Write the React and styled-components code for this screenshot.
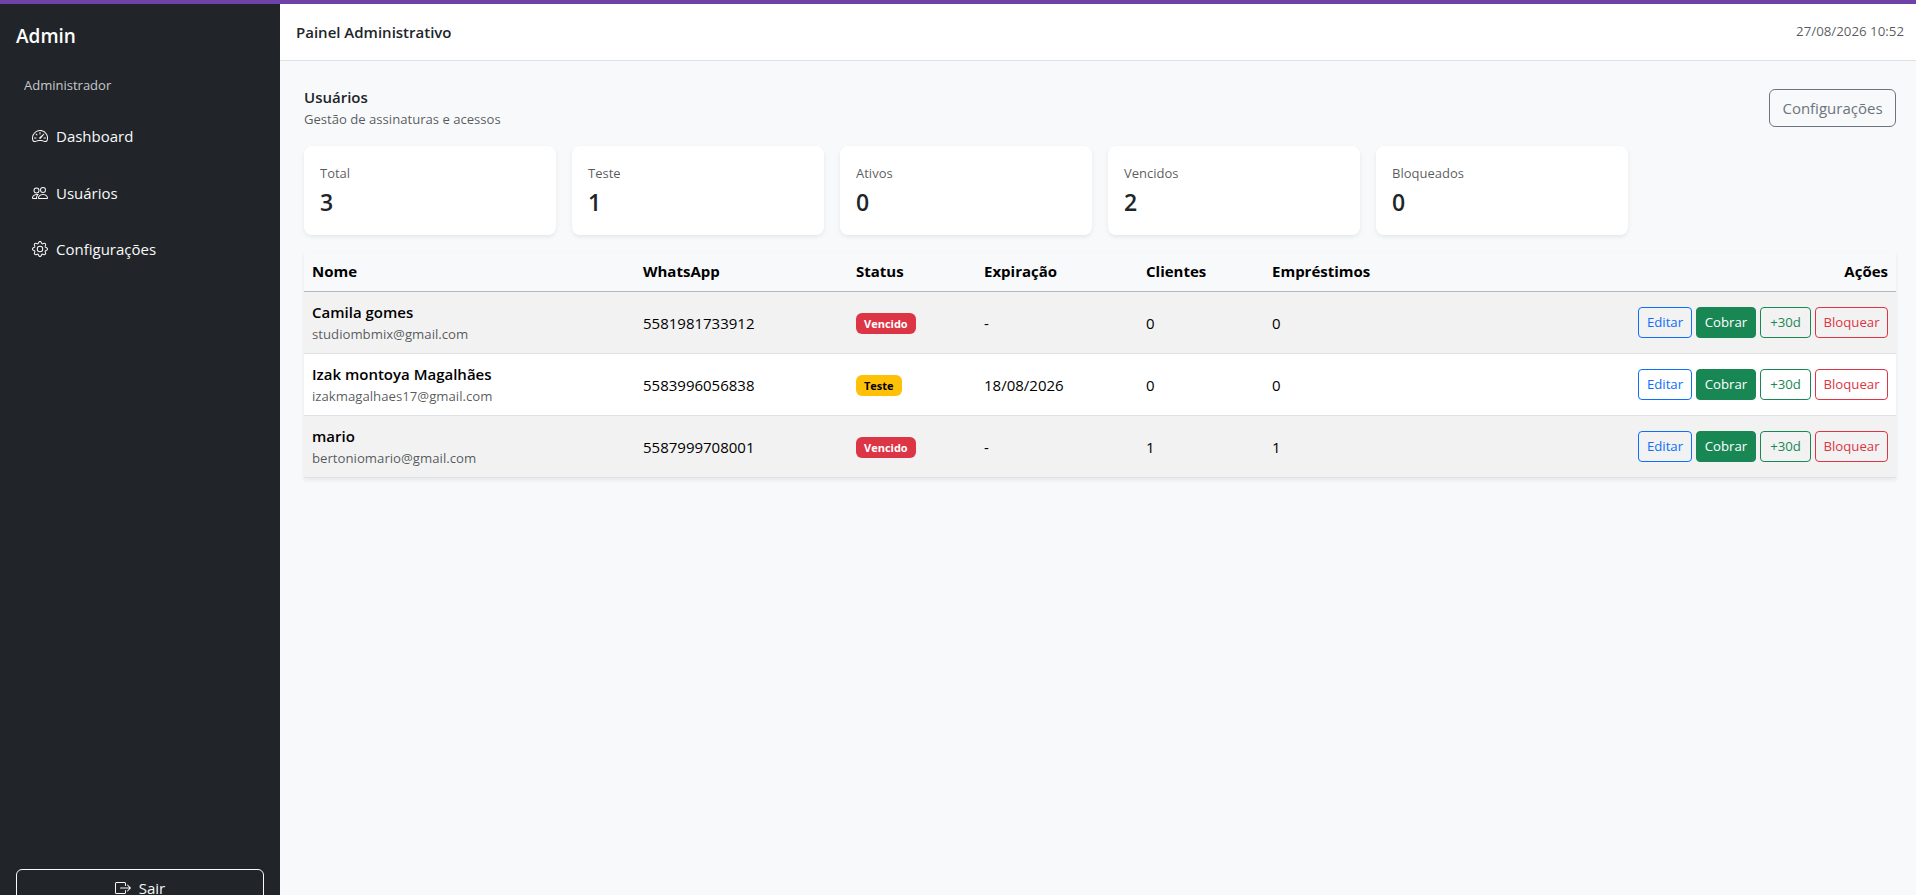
import styled, {createGlobalStyle} from "styled-components";
import {BsSpeedometer2, BsPeople, BsGear, BsBoxArrowRight} from "react-icons/bs";

const stats = [
	{label: "Total", value: 3},
	{label: "Teste", value: 1},
	{label: "Ativos", value: 0},
	{label: "Vencidos", value: 2},
	{label: "Bloqueados", value: 0}
]

const users = [
	{name: "Camila gomes", email: "studiombmix@gmail.com", phone: "5581981733912", status: "Vencido", expires: "-", clients: 0, loans: 0},
	{name: "Izak montoya Magalhães", email: "izakmagalhaes17@gmail.com", phone: "5583996056838", status: "Teste", expires: "18/08/2026", clients: 0, loans: 0},
	{name: "mario", email: "bertoniomario@gmail.com", phone: "5587999708001", status: "Vencido", expires: "-", clients: 1, loans: 1}
]

const columnWidths = [331, 213, 128, 162, 126]

export default function App() {
	return (
		<>
			<GlobalStyle/>
			<Shell>
				<AccentBar/>
				<Columns>
					<Sidebar>
						<div>
							<Brand>Admin</Brand>
							<Role>Administrador</Role>
							<Nav>
								<NavItem><BsSpeedometer2 size={16}/>Dashboard</NavItem>
								<NavItem><BsPeople size={16}/>Usuários</NavItem>
								<NavItem><BsGear size={16}/>Configurações</NavItem>
							</Nav>
						</div>
						<LogoutButton><BsBoxArrowRight size={16}/>Sair</LogoutButton>
					</Sidebar>
					<Content>
						<TopBar>
							<TopTitle>Painel Administrativo</TopTitle>
							<Clock>27/08/2026 10:52</Clock>
						</TopBar>
						<Main>
							<PageHead>
								<div>
									<PageTitle>Usuários</PageTitle>
									<PageSubtitle>Gestão de assinaturas e acessos</PageSubtitle>
								</div>
								<SettingsButton>Configurações</SettingsButton>
							</PageHead>
							<StatGrid>
								{stats.map(stat => (
									<StatCard key={stat.label}>
										<StatLabel>{stat.label}</StatLabel>
										<StatValue>{stat.value}</StatValue>
									</StatCard>
								))}
							</StatGrid>
							<UsersTable>
								<colgroup>
									{columnWidths.map((width, i) => <col key={i} style={{width}}/>)}
									<col/>
								</colgroup>
								<thead>
									<tr>
										<Th>Nome</Th>
										<Th>WhatsApp</Th>
										<Th>Status</Th>
										<Th>Expiração</Th>
										<Th>Clientes</Th>
										<Th>Empréstimos</Th>
										<Th $right>Ações</Th>
									</tr>
								</thead>
								<tbody>
									{users.map(user => (
										<Row key={user.email}>
											<Td>
												<UserName>{user.name}</UserName>
												<UserEmail>{user.email}</UserEmail>
											</Td>
											<TextTd>{user.phone}</TextTd>
											<Td><Badge $status={user.status}>{user.status}</Badge></Td>
											<TextTd>{user.expires}</TextTd>
											<TextTd>{user.clients}</TextTd>
											<TextTd>{user.loans}</TextTd>
											<Td>
												<Actions>
													<ActionButton $color="#0d6efd" $width={54}>Editar</ActionButton>
													<ActionButton $color="#198754" $width={60} $solid>Cobrar</ActionButton>
													<ActionButton $color="#198754" $width={51}>+30d</ActionButton>
													<ActionButton $color="#dc3545" $width={73}>Bloquear</ActionButton>
												</Actions>
											</Td>
										</Row>
									))}
								</tbody>
							</UsersTable>
						</Main>
					</Content>
				</Columns>
			</Shell>
		</>
	)
}

const GlobalStyle = createGlobalStyle`
  html, body {
    margin: 0;
    height: 100%;
    overflow: hidden;
  }

  body {
    font-family: "Open Sans", "Noto Sans", sans-serif;
    font-size: 15px;
    line-height: 1.5;
    color: #212529;
    background: #f8f9fa;
  }

  * {
    box-sizing: border-box;
  }
`

const Shell = styled.div`
  height: 100vh;
  display: flex;
  flex-direction: column;
  overflow: hidden;
`

const AccentBar = styled.div`
  height: 4px;
  flex: none;
  background: #6f42a8;
`

const Columns = styled.div`
  flex: 1;
  min-height: 0;
  display: flex;
`

const Sidebar = styled.aside`
  width: 280px;
  flex: none;
  height: 919px;
  padding: 17px 16px 16px;
  display: flex;
  flex-direction: column;
  justify-content: space-between;
  background: #212529;
  color: #fff;
`

const Brand = styled.div`
  font-size: 19px;
  font-weight: 600;
  line-height: 30px;
`

const Role = styled.div`
  margin: 24px 0 0 8px;
  font-size: 13px;
  line-height: 20px;
  color: rgba(255, 255, 255, 0.75);
`

const Nav = styled.nav`
  margin-top: 13px;
  display: flex;
  flex-direction: column;
`

const NavItem = styled.a`
  height: 56.5px;
  padding-left: 16px;
  display: flex;
  align-items: center;
  gap: 8px;
  color: #f8f9fa;
  font-size: 15px;
`

const LogoutButton = styled.button`
  height: 38px;
  width: 100%;
  display: flex;
  align-items: center;
  justify-content: center;
  gap: 8px;
  background: transparent;
  border: 1px solid #f8f9fa;
  border-radius: 6px;
  color: #f8f9fa;
  font: inherit;
`

const Content = styled.div`
  flex: 1;
  min-width: 0;
  display: flex;
  flex-direction: column;
`

const TopBar = styled.header`
  height: 57px;
  flex: none;
  padding: 0 12px 0 16px;
  display: flex;
  align-items: center;
  justify-content: space-between;
  background: #fff;
  border-bottom: 1px solid #dee2e6;
`

const TopTitle = styled.div`
  font-size: 15px;
  font-weight: 600;
`

const Clock = styled.div`
  font-size: 13.3px;
  color: rgba(33, 37, 41, 0.75);
`

const Main = styled.main`
  padding: 25px 20px 24px 24px;
`

const PageHead = styled.div`
  height: 44px;
  display: flex;
  align-items: center;
  justify-content: space-between;
  margin-bottom: 16px;
`

const PageTitle = styled.div`
  font-size: 15px;
  font-weight: 600;
  line-height: 22px;
`

const PageSubtitle = styled.div`
  font-size: 13.1px;
  line-height: 22px;
  color: rgba(33, 37, 41, 0.75);
`

const SettingsButton = styled.button`
  height: 38px;
  width: 127px;
  padding: 0;
  background: transparent;
  border: 1px solid #6c757d;
  border-radius: 6px;
  color: #6c757d;
  font: inherit;
`

const StatGrid = styled.div`
  display: grid;
  grid-template-columns: repeat(6, 1fr);
  gap: 16px;
  margin-bottom: 17px;
`

const StatCard = styled.div`
  height: 89px;
  padding: 17px 16px 0;
  background: #fff;
  border-radius: 8px;
  box-shadow: 0 2px 4px rgba(0, 0, 0, 0.075);
`

const StatLabel = styled.div`
  font-size: 13px;
  line-height: 20px;
  color: rgba(33, 37, 41, 0.75);
`

const StatValue = styled.div`
  margin-top: 1px;
  font-size: 23px;
  font-weight: 600;
  line-height: 36px;
`

const UsersTable = styled.table`
  width: 100%;
  table-layout: fixed;
  border-collapse: collapse;
  box-shadow: 0 2px 4px rgba(0, 0, 0, 0.075);
`

const Th = styled.th`
  height: 39px;
  padding: 8px;
  border-bottom: 1px solid #b5b8bb;
  color: #000;
  font-size: 15px;
  font-weight: 700;
  text-align: ${({$right}) => ($right ? "right" : "left")};
`

const Td = styled.td`
  height: 62px;
  padding: 8px;
  border-bottom: 1px solid #dee2e6;
  color: #000;
  font-size: 15px;
  vertical-align: middle;
`

const TextTd = styled(Td)`
  padding-top: 10px;
`

const Row = styled.tr`
  background: #fff;

  &:nth-child(odd) {
    background: #f2f2f2;
  }
`

const UserName = styled.div`
  font-weight: 600;
  line-height: 24px;
`

const UserEmail = styled.div`
  font-size: 13.2px;
  line-height: 20px;
  color: rgba(33, 37, 41, 0.75);
`

const Badge = styled.span`
  display: inline-block;
  padding: 4px 8px;
  border-radius: 6px;
  font-size: 11px;
  font-weight: 700;
  line-height: 13px;
  color: ${({$status}) => ($status === "Teste" ? "#000" : "#fff")};
  background: ${({$status}) => ($status === "Teste" ? "#ffc107" : "#dc3545")};
`

const Actions = styled.div`
  display: flex;
  justify-content: flex-end;
  gap: 4px;
`

const ActionButton = styled.button`
  width: ${({$width}) => $width}px;
  height: 31px;
  padding: 0;
  border: 1px solid ${({$color}) => $color};
  border-radius: 4px;
  background: ${({$color, $solid}) => ($solid ? $color : "transparent")};
  color: ${({$color, $solid}) => ($solid ? "#fff" : $color)};
  font-family: inherit;
  font-size: 13.2px;
`
